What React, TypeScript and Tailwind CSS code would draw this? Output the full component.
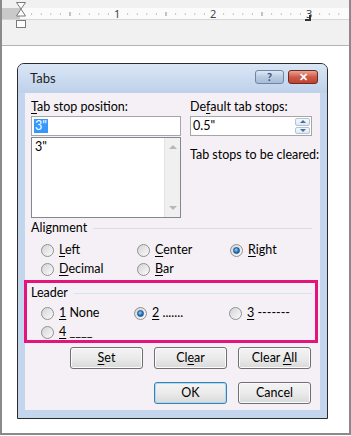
import React from 'react';

const font = { fontFamily: 'Lato, "Noto Sans", sans-serif' };

const Key: React.FC<{ children: React.ReactNode }> = ({ children }) => (
  <span className="underline underline-offset-2 decoration-1">{children}</span>
);

const Radio: React.FC<{ checked?: boolean }> = ({ checked }) => (
  <span className="w-[13px] h-[13px] rounded-full border border-[#8f9193] bg-gradient-to-br from-[#d4d4d4] to-[#fbfbfb] flex items-center justify-center shrink-0">
    {checked && (
      <span className="w-[7px] h-[7px] rounded-full bg-[radial-gradient(circle_at_40%_35%,#8fd0ff,#1d72c4_60%,#0d3f7a)] border border-[#1d4f86]" />
    )}
  </span>
);

const Option: React.FC<{ checked?: boolean; children: React.ReactNode }> = ({ checked, children }) => (
  <div className="flex items-center gap-[5px] h-[19px]">
    <Radio checked={checked} />
    <span>{children}</span>
  </div>
);

const Btn: React.FC<{ children: React.ReactNode; primary?: boolean }> = ({ children, primary }) => (
  <button
    className={`w-[73px] h-[22px] rounded-[3px] border text-[12.5px] leading-none flex items-center justify-center bg-gradient-to-b from-[#f3f3f3] via-[#ebebeb] to-[#d9d9d9] ${
      primary ? 'border-[#3c7fb1] shadow-[inset_0_0_0_1px_#a8dcf3]' : 'border-[#707070] shadow-[inset_0_0_0_1px_#fbfbfb]'
    }`}
  >
    <span>{children}</span>
  </button>
);

const GroupHeader: React.FC<{ label: string; line: string }> = ({ label, line }) => (
  <div className="flex items-center gap-[6px] h-[16px]">
    <span>{label}</span>
    <span className={`flex-1 h-px ${line}`} />
  </div>
);

const Ruler: React.FC = () => {
  const ticks: React.ReactNode[] = [];
  for (let i = 1; i < 34; i++) {
    const x = 20 + i * 9.6;
    if (i % 10 === 0) continue;
    if (i % 5 === 0) ticks.push(<line key={i} x1={x} x2={x} y1={12} y2={16} stroke="#8a8a8a" />);
    else ticks.push(<rect key={i} x={x - 0.5} y={13.5} width={1} height={1} fill="#8a8a8a" />);
  }
  return (
    <svg width="347" height="46" className="block">
      <rect x="0" y="0" width="347" height="46" fill="#f1f1f1" />
      <rect x="0" y="8" width="347" height="11" fill="#fbfbfb" />
      <rect x="0" y="8" width="18" height="11" fill="#c9c9c9" />
      <line x1="0" x2="347" y1="19.5" y2="19.5" stroke="#d6d6d6" />
      <line x1="0" x2="347" y1="45.5" y2="45.5" stroke="#b3b3b3" />
      {ticks}
      <text x="112" y="18" fontSize="11" fill="#444" fontFamily="Noto Sans, sans-serif">1</text>
      <text x="208" y="18" fontSize="11" fill="#444" fontFamily="Noto Sans, sans-serif">2</text>
      <text x="304" y="18" fontSize="11" fill="#444" fontFamily="Noto Sans, sans-serif">3</text>
      <path d="M14.5 2.5 H23.5 L19 9 L23.5 16 H14.5 L19 9 Z" fill="#fff" stroke="#7a7a7a" />
      <rect x="14.5" y="20.5" width="9" height="7" fill="#fff" stroke="#7a7a7a" />
      <path d="M308 15 V20 H303" fill="none" stroke="#333" strokeWidth="2" />
    </svg>
  );
};

export default function App() {
  return (
    <div className="w-[351px] h-[436px] bg-white overflow-hidden text-[12.5px] text-black" style={font}>
      <div className="h-[435px] border-x-2 border-b-2 border-[#8a8a8a] flex flex-col">
        <Ruler />
        <div className="pl-[15px] pt-[17px]">
          {/* Dialog */}
          <div className="w-[311px] h-[356px] border border-[#2b2b2b] rounded-t-[7px] bg-[#c4d6ee] flex flex-col overflow-hidden">
            <div className="h-[29px] bg-gradient-to-b from-[#dae6f5] to-[#bed1ea] flex items-center justify-between pl-[12px] pr-[9px]">
              <span className="text-[13px] text-[#1e1e1e]">Tabs</span>
              <div className="flex gap-[4px] -mt-[4px]">
                <div className="w-[29px] h-[14px] rounded-[3px] border border-[#6d86a6] bg-gradient-to-b from-[#dfe9f5] via-[#b9cbe2] to-[#a7bcd7] flex items-center justify-center text-[11px] font-bold text-[#3a4f6e] leading-none">?</div>
                <div className="w-[30px] h-[14px] rounded-[3px] border border-[#6e2a22] bg-gradient-to-b from-[#e8a493] via-[#cf5a48] to-[#c0412f] flex items-center justify-center text-[11px] font-bold text-white leading-none">✕</div>
              </div>
            </div>
            <div className="flex-1 mx-[7px] mb-[8px] bg-[#f5f0f5] pt-[6px] pl-[6px] pr-[8px] flex flex-col">
              <div className="flex gap-[9px]">
                <div className="w-[152px] flex flex-col">
                  <span className="h-[16px] leading-[16px]"><Key>T</Key>ab stop position:</span>
                  <div className="mt-[1px] h-[20px] bg-white border border-[#a6a6a6] flex items-center pl-[2px]">
                    <span className="bg-[#3399ff] text-white px-px leading-[14px]">3"</span>
                  </div>
                  <div className="mt-[1px] h-[81px] bg-white border border-[#828790] flex">
                    <div className="flex-1 pl-[3px] pt-[1px] leading-[15px]">3"</div>
                    <div className="w-[16px] bg-[#f0f0f0] border-l border-[#e3e3e3] flex flex-col justify-between items-center py-[6px]">
                      <svg width="8" height="5"><path d="M0 5 L4 1 L8 5 Z" fill="#b8b8b8" /></svg>
                      <svg width="8" height="5"><path d="M0 0 L4 4 L8 0 Z" fill="#b8b8b8" /></svg>
                    </div>
                  </div>
                </div>
                <div className="w-[122px] flex flex-col">
                  <span className="h-[16px] leading-[16px]">De<Key>f</Key>ault tab stops:</span>
                  <div className="mt-[1px] h-[20px] bg-white border border-[#a6a6a6] flex items-center pl-[2px] pr-[1px]">
                    <span className="flex-1">0.5"</span>
                    <div className="w-[15px] h-[16px] flex flex-col gap-px">
                      <div className="flex-1 rounded-[2px] border border-[#b5c3d4] bg-gradient-to-b from-[#f4f8fc] to-[#dfe8f2] flex items-center justify-center">
                        <svg width="6" height="3"><path d="M0 3 L3 0 L6 3 Z" fill="#4a6f9a" /></svg>
                      </div>
                      <div className="flex-1 rounded-[2px] border border-[#b5c3d4] bg-gradient-to-b from-[#f4f8fc] to-[#dfe8f2] flex items-center justify-center">
                        <svg width="6" height="3"><path d="M0 0 L3 3 L6 0 Z" fill="#4a6f9a" /></svg>
                      </div>
                    </div>
                  </div>
                  <span className="mt-[11px] h-[16px] leading-[16px] whitespace-nowrap">Tab stops to be cleared:</span>
                </div>
              </div>

              <div className="mt-[2px]">
                <GroupHeader label="Alignment" line="bg-[#dcdcdc]" />
              </div>
              <div className="grid grid-cols-[96px_93px_1fr] pl-[10px] mt-[5px]">
                <Option><Key>L</Key>eft</Option>
                <Option><Key>C</Key>enter</Option>
                <Option checked><Key>R</Key>ight</Option>
                <Option><Key>D</Key>ecimal</Option>
                <Option><Key>B</Key>ar</Option>
              </div>

              <div className="mt-[1px] -ml-[7px] w-[294px] h-[63px] border-[3px] border-[#e3157d] pl-[4px] pr-[3px] pt-[2px]">
                <GroupHeader label="Leader" line="bg-[#d3e6ea]" />
                <div className="grid grid-cols-[93px_95px_1fr] pl-[10px] mt-[3px]">
                  <Option><Key>1</Key> None</Option>
                  <Option checked><Key>2</Key> .......</Option>
                  <Option><Key>3</Key> -------</Option>
                  <Option><Key>4</Key> ____</Option>
                </div>
              </div>

              <div className="flex justify-end gap-[11px] mt-[4px] pr-[1px]">
                <Btn><Key>S</Key>et</Btn>
                <Btn>Cl<Key>e</Key>ar</Btn>
                <Btn>Clear <Key>A</Key>ll</Btn>
              </div>
              <div className="flex justify-end gap-[11px] mt-[13px] pr-[1px]">
                <Btn primary>OK</Btn>
                <Btn>Cancel</Btn>
              </div>
            </div>
          </div>
        </div>
      </div>
    </div>
  );
}
